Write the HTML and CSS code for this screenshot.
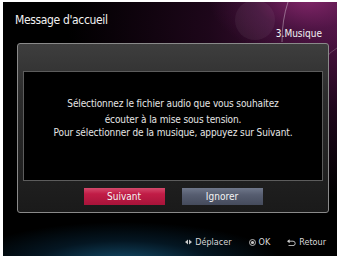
FILE: index.html
```html
<!DOCTYPE html>
<html lang="fr">
<head>
<meta charset="utf-8">
<title>Message d'accueil</title>
<link rel="stylesheet" href="styles.css">
</head>
<body>
<div class="screen">
  <svg class="deco" width="334" height="80" viewBox="0 0 334 80" aria-hidden="true">
    <circle cx="252" cy="18" r="20" fill="rgba(255,255,255,0.05)"/>
    <path d="M285 0 Q279 18 279 40" stroke="rgba(255,255,255,0.45)" stroke-width="0.8" fill="none"/>
    <path d="M334 46 Q326 50 322 58" stroke="rgba(255,255,255,0.25)" stroke-width="0.8" fill="none"/>
  </svg>
  <header class="header">
    <h1 class="title">Message d'accueil</h1>
    <div class="step">3.Musique</div>
  </header>
  <section class="panel">
    <div class="inner">
      <p class="line first">Sélectionnez le fichier audio que vous souhaitez</p>
      <p class="line">écouter à la mise sous tension.</p>
      <p class="line">Pour sélectionner de la musique, appuyez sur Suivant.</p>
    </div>
    <div class="buttons">
      <button class="btn btn-primary">Suivant</button>
      <button class="btn btn-secondary">Ignorer</button>
    </div>
  </section>
  <footer class="footer">
    <span class="hint">
      <svg class="ico" width="7" height="6" viewBox="0 0 7 6"><path d="M0 3 L3 0.5 L3 5.5Z M7 3 L4 0.5 L4 5.5Z" fill="#c8c8c8"/></svg>
      Déplacer
    </span>
    <span class="hint">
      <svg class="ico" width="7" height="7" viewBox="0 0 7 7"><circle cx="3.5" cy="3.5" r="3" fill="none" stroke="#c8c8c8" stroke-width="0.9"/><circle cx="3.5" cy="3.5" r="1.6" fill="#c8c8c8"/></svg>
      OK
    </span>
    <span class="hint">
      <svg class="ico" width="9" height="7" viewBox="0 0 9 7"><path d="M1.5 2.2 H6 A2.2 2.2 0 0 1 6 6.6 H1.5" fill="none" stroke="#d0d0d0" stroke-width="0.9"/><path d="M0 2.2 L2.6 0.2 L2.6 4.2Z" fill="#d0d0d0"/></svg>
      Retour
    </span>
  </footer>
</div>
</body>
</html>
```

FILE: styles.css
```css
html, body {
  margin: 0;
  padding: 0;
  background: #ffffff;
}
body {
  font-family: "Liberation Sans Narrow", "DejaVu Sans Condensed", "Liberation Sans", sans-serif;
  width: 337px;
  height: 256px;
  overflow: hidden;
}
.screen {
  position: relative;
  margin: 2px 0 0 3px;
  width: 334px;
  height: 254px;
  display: flex;
  flex-direction: column;
  overflow: hidden;
  background:
    radial-gradient(ellipse 160px 42px at 120px 262px, rgba(25,100,140,0.8), rgba(10,55,85,0.4) 55%, rgba(0,0,0,0) 100%),
    radial-gradient(ellipse 100px 60px at 305px -5px, rgba(150,45,120,0.8), rgba(90,25,80,0.45) 55%, rgba(0,0,0,0) 100%),
    radial-gradient(ellipse 280px 170px at 345px 25px, rgba(85,20,72,0.95), rgba(45,10,40,0.65) 50%, rgba(0,0,0,0) 100%),
    #000;
}
.deco {
  position: absolute;
  left: 0;
  top: 0;
  pointer-events: none;
}
.header {
  position: relative;
  height: 41px;
  display: flex;
  justify-content: space-between;
  padding: 0 15px 0 12px;
}
.title {
  margin: 11px 0 0;
  font-size: 12px;
  letter-spacing: -0.35px;
  font-weight: normal;
  color: #f2f2f2;
  line-height: 15px;
}
.step {
  margin-top: 25px;
  font-size: 10px;
  color: #f2f2f2;
  line-height: 13px;
}
.panel {
  position: relative;
  margin: 0 8px 0 14px;
  height: 170px;
  box-sizing: border-box;
  border: 1px solid #8a8a8a;
  border-radius: 3px;
  background: linear-gradient(#3e3e3e, #2c2c2c 30%, #1a1a1a);
  padding: 27px 5px 0 5px;
  display: flex;
  flex-direction: column;
}
.inner {
  height: 110px;
  box-sizing: border-box;
  border: 1px solid #5c5c5c;
  background: #000;
  padding-top: 25px;
  text-align: center;
}
.line {
  margin: 0;
  font-size: 10px;
  letter-spacing: -0.12px;
  line-height: 13px;
  color: #e6e6e6;
}
.line.first {
  margin-bottom: 3px;
}
.buttons {
  display: flex;
  justify-content: center;
  gap: 17px;
  margin-top: 7px;
}
.btn {
  width: 81px;
  height: 17px;
  border: 0;
  padding: 0;
  font-family: inherit;
  font-size: 10px;
  color: #f4f4f4;
  line-height: 17px;
}
.btn-primary {
  background: linear-gradient(#d44a6c, #c11c46 35%, #a8143a);
}
.btn-secondary {
  background: linear-gradient(#6f778a, #565d70 40%, #454b5c);
}
.footer {
  display: flex;
  justify-content: flex-end;
  gap: 17px;
  padding: 24px 11px 0 0;
  font-size: 9px;
  line-height: 10px;
  color: #d8d8d8;
}
.hint {
  display: flex;
  align-items: center;
  gap: 3px;
}
.ico {
  display: block;
}
```
